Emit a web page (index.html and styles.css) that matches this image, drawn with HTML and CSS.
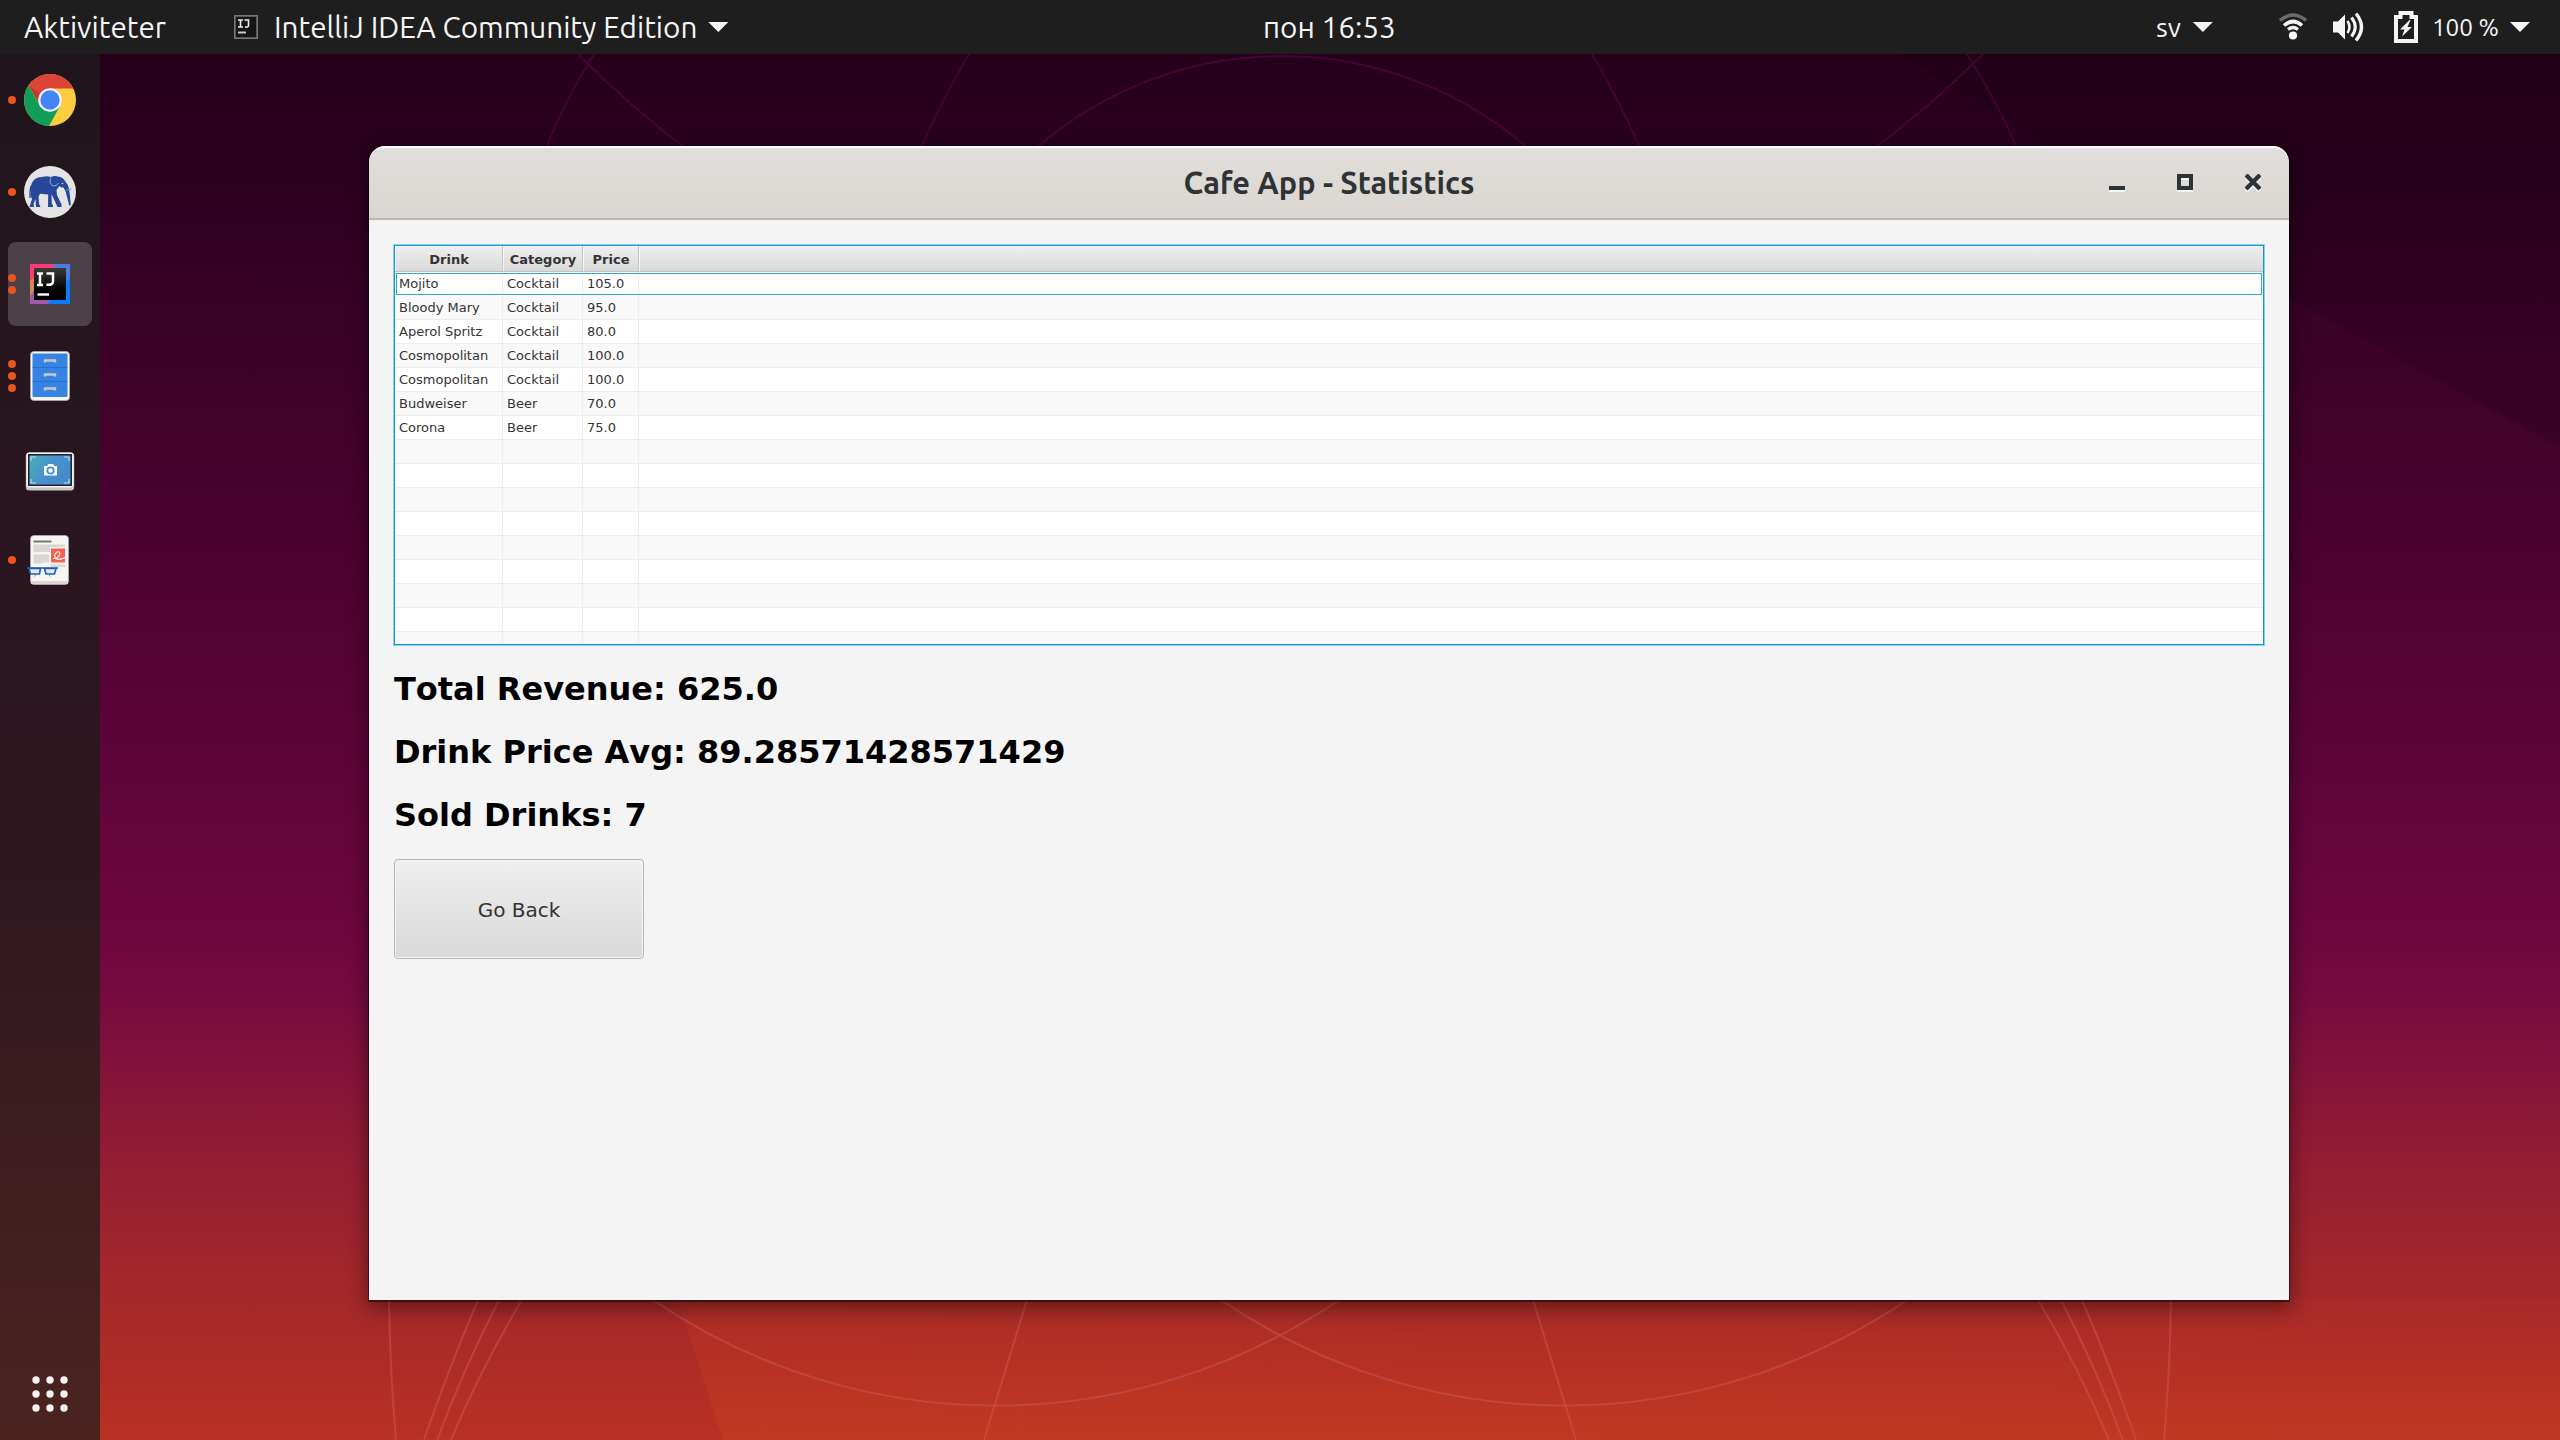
FILE: index.html
```html
<!DOCTYPE html>
<html lang="sv">
<head>
<meta charset="utf-8">
<title>Cafe App - Statistics</title>
<link rel="stylesheet" href="styles.css">
</head>
<body>
<svg class="wallpaper" viewBox="0 0 2560 1440" aria-hidden="true">
  <defs>
    <linearGradient id="glow" x1="2000" y1="1270" x2="1996" y2="1450" gradientUnits="userSpaceOnUse">
      <stop offset="0" stop-color="#c83a22" stop-opacity="0"/><stop offset="1" stop-color="#c83e20" stop-opacity=".5"/>
    </linearGradient>
  </defs>
  <path d="M1900 54 L2289 298 L2560 447 V54Z" fill="#000" fill-opacity=".11"/>
  <path d="M678 1300 L723 1440 H2560 V1300Z" fill="url(#glow)"/>
  <g fill="none" stroke="#7a0a50" stroke-opacity=".36" stroke-width="2">
    <circle cx="1282" cy="430" r="374"/>
    <path d="M578 54 Q630 107 688 150M594 54 Q565 100 545 150M969 54 Q942 100 920 150M1592 54 Q1619 100 1641 150M1967 54 Q1996 100 2018 150M1983 54 Q1930 107 1872 150"/>
  </g>
  <g fill="none" stroke="#c9605c" stroke-opacity=".45" stroke-width="2">
    <path d="M653 1300 A610 610 0 0 0 1339 1300M1221 1300 A610 610 0 0 0 1907 1300"/>
    <path d="M389 1300 Q390 1370 396 1440M478 1300 Q448 1370 424 1440M499 1300 Q463 1370 437 1440M522 1300 Q480 1370 451 1440M1027 1300 L984 1440"/>
    <path d="M2171 1300 Q2170 1370 2164 1440M2082 1300 Q2112 1370 2136 1440M2061 1300 Q2097 1370 2123 1440M2038 1300 Q2080 1370 2109 1440M1533 1300 L1576 1440"/>
  </g>
</svg>
<div class="desktop">
  <header class="topbar">
    <div class="side">
      <span class="activities">Aktiviteter</span>
      <svg class="app-icon" width="24" height="24" viewBox="0 0 24 24"><rect x=".8" y=".8" width="22.4" height="22.4" fill="#151515" stroke="#777" stroke-width="1.8"/><path d="M4 5h5M6.500 5v7M4 12h5M10.500 5h4v5.500q0 2-3.500 1.500" fill="none" stroke="#eee" stroke-width="1.6"/><path d="M4 17.500h8" stroke="#ccc" stroke-width="2"/></svg>
      <span class="app-name">IntelliJ IDEA Community Edition</span>
      <i class="caret"></i>
    </div>
    <div class="clock">пон 16:53</div>
    <div class="side right">
      <span class="lang">sv</span><i class="caret"></i>
      <svg class="wifi" width="28" height="28" viewBox="0 0 28 28" fill="none"><path d="M1 7.500Q14-3.500 27 7.500" stroke="#6b6b6b" stroke-width="3.600"/><path d="M5 12.500Q14 4.500 23 12.500" stroke="#f5f5f5" stroke-width="3.600"/><path d="M9 16.500Q14 12.500 19 16.500" stroke="#f5f5f5" stroke-width="3.200"/><circle cx="14" cy="22.500" r="4.100" fill="#f5f5f5"/></svg>
      <svg class="sound" width="32" height="30" viewBox="0 0 32 30" fill="none" stroke="#f5f5f5"><path d="M0 9.500h5l7-7v25l-7-7H0z" fill="#f5f5f5" stroke="none"/><path d="M14.500 9q4 6 0 12" stroke-width="2.600"/><path d="M18.500 5.500q7.500 9.500 0 19" stroke-width="3"/><path d="M23 1.500q11 13.500 0 27" stroke-width="3.400"/></svg>
      <svg class="battery" width="24" height="32" viewBox="0 0 24 32"><path d="M6.500 2h11v4H22v24H2V6h4.500z" fill="none" stroke="#f5f5f5" stroke-width="4"/><path d="M15.500 9L6 18.500h4.500L8 25.500 18 16h-4.500L16.500 9z" fill="#f5f5f5"/></svg>
      <span class="percent">100 %</span><i class="caret"></i>
    </div>
  </header>
  <div class="body">
    <nav class="dock">
      <div class="item"><span class="dots"><b></b></span>
        <svg width="52" height="52" viewBox="0 0 52 52"><circle cx="26" cy="26" r="26" fill="#fdcd40"/><path d="M4.500 11.500A26 26 0 0 1 49.300 14.500H26L15 29.500Z" fill="#db4437"/><path d="M4.500 11.500A26 26 0 0 0 25 52L36 32 26 37 15 30Z" fill="#0f9d58"/><path d="M4.500 11.500L15 29.500 17 20z" fill="#a52714" opacity=".4"/><circle cx="26" cy="26" r="11.800" fill="#f1f1f1"/><circle cx="26" cy="26" r="9.700" fill="#4285f4"/></svg></div>
      <div class="item"><span class="dots"><b></b></span>
        <svg width="52" height="52" viewBox="0 0 52 52"><circle cx="26" cy="26" r="26" fill="#e4e4e5"/><path d="M6.500 29Q6 18 9.500 14.500 12 11 18 11q5-1.500 9 0 3-1.500 7-.5 5 .5 7 4.500 3 3 4 8l1 7 .8 9.500h-1.600L43 31q-1-6-3.500-9.500-2.500 .5-4-1.500l-3 4 .5 5 4.500 9.500v2.500h-4L27.500 28l.3 9.500 1.200 2V41h-5l.2-12.500-8.200-.8-1.500 3 .5 7 1.500 3.300h-4.500l-.5-8-2 4.500 .5 3.500H5.500l2.500-8z" fill="#27479a"/><path d="M7 20Q5.500 25 6 32" fill="none" stroke="#27479a" stroke-width="1.400"/><path d="M42 24l5.500-1" stroke="#8894b5" stroke-width="1"/><path d="M27 11.500q-2.500 6 2 8.500 4 .5 5.500-3" fill="none" stroke="#bcc4d8" stroke-width=".8"/><circle cx="38.500" cy="17.500" r=".8" fill="#dde"/></svg></div>
      <div class="item active"><span class="dots"><b></b><b></b></span>
        <svg width="40" height="40" viewBox="0 0 40 40"><defs><linearGradient id="ijk" x2="0" y2="1"><stop stop-color="#3a3a3a"/><stop offset=".7"/></linearGradient></defs><path d="M0 0h40v40H0z" fill="#4b7ddd"/><path d="M0 0h22l8 8L0 17z" fill="#fe3a73"/><path d="M0 16l12-4v16L4 36 0 40z" fill="#d08b50"/><path d="M0 40v-8l6-8 14 16z" fill="#a05aa8"/><path d="M18 40l22-26v26z" fill="#087cfa"/><path d="M4 4h32v32H4z" fill="url(#ijk)"/><path d="M7 9.500h6M10 9.500v11M7 21h6M16.500 9.500h6.500v8q0 4-6.500 3" fill="none" stroke="#fff" stroke-width="2.500"/><path d="M7.500 30.500h11.500" stroke="#fff" stroke-width="2.400"/></svg></div>
      <div class="item"><span class="dots"><b></b><b></b><b></b></span>
        <svg width="40" height="50" viewBox="0 0 40 50"><rect x=".5" y=".5" width="39" height="49" rx="3.500" fill="#f6f5f4" stroke="#aaa" stroke-width=".8"/><rect x="2.500" y="2.500" width="35" height="43.500" rx="1" fill="#3584e4"/><path d="M2.500 16.500h35M2.500 30.500h35" stroke="#2a6fca" stroke-width="1.200"/><path d="M15 11.500V9.500h10v2M15 25.500v-2h10v2M15 39.500v-2h10v2" fill="none" stroke="#c9c8c8" stroke-width="2.400"/></svg></div>
      <div class="item"><span class="dots"></span>
        <svg class="shot" width="50" height="40" viewBox="0 0 50 40"><defs><linearGradient id="scr" y2=".5"><stop stop-color="#45b3ae"/><stop offset=".6" stop-color="#4a8fd0"/><stop offset="1" stop-color="#438cc8"/></linearGradient></defs><rect x=".8" y="1.500" width="48.400" height="38" rx="3.500" fill="#c6c5c3"/><rect x="1.500" y="1.500" width="47" height="35" rx="3" fill="#f3f2f0"/><path d="M3 3h44v32H3z" fill="#241f31"/><path d="M4.500 4.500h41v29h-41z" fill="url(#scr)"/><path d="M6 10V6h5M39 6h5v4M6 28v4h5M39 32h5v-4" fill="none" stroke="#b5dcea" stroke-width="1.200"/><path d="M19 15h3l1.500-2h4.500l1.500 2H32v9.500H19z" fill="#fff"/><circle cx="25.500" cy="19.500" r="3.200" fill="none" stroke="#4191cc" stroke-width="1.800"/></svg></div>
      <div class="item"><span class="dots"><b></b></span>
        <svg class="doc" width="44" height="50" viewBox="0 0 44 50"><rect x="3.500" y=".5" width="38" height="49" rx="3.500" fill="#f6f5f4" stroke="#bbb" stroke-width=".6"/><path d="M6.500 6.500h18" stroke="#77767b" stroke-width="2"/><path d="M6.500 9.500h31.500v2.500H23v5H6.500zM6.500 19.500H22v8H15v1H6.500zM24 29.500h14v2.500H24zM4 46h37v3H4z" fill="#d8d7d3"/><path d="M24 13.500h14v14H24z" fill="#f66151"/><path d="M26 23.500q6 0 7-5 0-2.500-3-1.500-4 3-1 6.500 3 2 9-1" fill="none" stroke="#fff" stroke-width="1.100"/><path d="M2 33.500h11.500l-1 5.500H3.500zM17.500 33.500H29l-1.500 5.500h-8.500z" fill="#e4eaf1" stroke="#1a5fb4" stroke-width="1.600"/><path d="M0 33h31" stroke="#1a5fb4" stroke-width="1.500"/><path d="M7 41.500l3-2M24 41.500l-3-2" stroke="#aaa" stroke-width="1"/></svg></div>
      <svg class="apps" width="36" height="36" viewBox="0 0 36 36" fill="#f3f1ef"><circle cx="4" cy="4" r="3.700"/><circle cx="18" cy="4" r="3.700"/><circle cx="32" cy="4" r="3.700"/><circle cx="4" cy="18" r="3.700"/><circle cx="18" cy="18" r="3.700"/><circle cx="32" cy="18" r="3.700"/><circle cx="4" cy="32" r="3.700"/><circle cx="18" cy="32" r="3.700"/><circle cx="32" cy="32" r="3.700"/></svg>
    </nav>
    <main class="window">
      <div class="titlebar">
        <h1>Cafe App - Statistics</h1>
        <div class="controls">
          <svg width="16" height="18" viewBox="0 0 16 18"><path d="M0 14h16v4H0z" fill="#f7f6f5"/><path d="M0 12h16v4H0z" fill="#2e3436"/></svg>
          <svg width="16" height="18" viewBox="0 0 16 18"><path d="M2 4h12v12H2z" fill="none" stroke="#f7f6f5" stroke-width="4"/><path d="M2 2h12v12H2z" fill="none" stroke="#2e3436" stroke-width="4"/></svg>
          <svg width="16" height="18" viewBox="0 0 16 18"><path d="M1 3l14 14M15 3L1 17" stroke="#f7f6f5" stroke-width="4"/><path d="M1 1l14 14M15 1L1 15" stroke="#2e3436" stroke-width="4.400"/></svg>
        </div>
      </div>
      <div class="content">
        <div class="table">
          <div class="row head"><span>Drink</span><span>Category</span><span>Price</span><span></span></div>
          <div class="row focused"><span>Mojito</span><span>Cocktail</span><span>105.0</span><span></span></div>
          <div class="row"><span>Bloody Mary</span><span>Cocktail</span><span>95.0</span><span></span></div>
          <div class="row"><span>Aperol Spritz</span><span>Cocktail</span><span>80.0</span><span></span></div>
          <div class="row"><span>Cosmopolitan</span><span>Cocktail</span><span>100.0</span><span></span></div>
          <div class="row"><span>Cosmopolitan</span><span>Cocktail</span><span>100.0</span><span></span></div>
          <div class="row"><span>Budweiser</span><span>Beer</span><span>70.0</span><span></span></div>
          <div class="row"><span>Corona</span><span>Beer</span><span>75.0</span><span></span></div>
          <div class="row"><span></span><span></span><span></span><span></span></div>
          <div class="row"><span></span><span></span><span></span><span></span></div>
          <div class="row"><span></span><span></span><span></span><span></span></div>
          <div class="row"><span></span><span></span><span></span><span></span></div>
          <div class="row"><span></span><span></span><span></span><span></span></div>
          <div class="row"><span></span><span></span><span></span><span></span></div>
          <div class="row"><span></span><span></span><span></span><span></span></div>
          <div class="row"><span></span><span></span><span></span><span></span></div>
          <div class="row"><span></span><span></span><span></span><span></span></div>
        </div>
        <p class="stat">Total Revenue: 625.0</p>
        <p class="stat">Drink Price Avg: 89.28571428571429</p>
        <p class="stat">Sold Drinks: 7</p>
        <button class="back">Go Back</button>
      </div>
    </main>
  </div>
</div>
</body>
</html>
```

FILE: styles.css
```css
* { box-sizing: border-box; }
html, body { margin: 0; width: 2560px; height: 1440px; overflow: hidden; }
body {
  background: linear-gradient(#26001a 54px, #2a001e 160px, #3a0228 320px, #4a0230 530px, #5c0439 740px, #6d063f 920px, #740a40 990px, #84133a 1070px, #941d33 1160px, #a3272b 1280px, #ab2b26 1350px, #ba3125 1440px);
  font-family: "Ubuntu", "Noto Sans", sans-serif;
}
svg { display: block; flex: none; }
/* The wallpaper lies behind the shell. */
.wallpaper { position: absolute; inset: 0; width: 2560px; height: 1440px; }
.desktop { position: relative; display: flex; flex-direction: column; height: 1440px; }

.topbar {
  display: grid; grid-template-columns: 1239px 132px 1fr; align-items: center;
  height: 54px; padding: 0 30px 0 24px; background: #1e1e1e; color: #f5f5f5; font-size: 29.7px; line-height: 54px;
}
.side { display: flex; align-items: center; height: 54px; }
.side.right { justify-content: flex-end; }
.activities { width: 210px; }
.app-name { margin: 0 11px 0 16px; white-space: nowrap; }
.caret { flex: none; width: 20px; height: 10px; background: #f5f5f5; clip-path: polygon(0 0, 100% 0, 50% 100%); }
.clock { white-space: nowrap; height: 54px; }
.lang { margin-right: 12px; font-size: 27px; }
.wifi { margin-left: 66px; }
.sound { margin-left: 26px; }
.battery { margin-left: 29px; }
.percent { margin: 0 11px 0 14px; font-size: 24.3px; }

.body { display: flex; flex: 1; min-height: 0; }
.dock {
  display: flex; flex-direction: column; align-items: center;
  width: 100px; flex: none; padding: 4px 0 28px; gap: 8px;
  background: linear-gradient(#20151c, #28151f 30%, #30171f 60%, #452121 90%, #4a231f);
}
.item { display: grid; grid-template-columns: 1fr; place-items: center; position: relative; width: 84px; height: 84px; border-radius: 8px; }
.item.active { background: #4d4149; }
.dots { position: absolute; left: 0; top: 0; display: flex; flex-direction: column; justify-content: center; gap: 4px; height: 84px; }
.dots b { width: 8px; height: 8px; border-radius: 50%; background: #e95420; }
.shot { margin-top: 5px; }
.doc { margin-right: 2px; }
.apps { margin-top: auto; }

.window {
  width: 1920px; height: 1154px; margin: 92px 0 0 269px; display: flex; flex-direction: column;
  border-radius: 16px 16px 0 0; overflow: hidden; background: #f4f4f4;
  box-shadow: 0 1px 0 1px rgba(0, 0, 0, .45), 0 6px 20px 2px rgba(0, 0, 0, .42);
}
.titlebar {
  display: grid; grid-template-columns: 1fr auto 1fr; align-items: center;
  height: 74px; padding: 0 28px; border-top: 2px solid #fff; border-bottom: 2px solid #bfb8b1;
  border-radius: 16px 16px 0 0; background: linear-gradient(#e1dedb, #dad7d2); color: #2e3436;
}
h1 { grid-column: 2; margin: 0; font-size: 30.7px; line-height: 70px; height: 70px; font-weight: 700; white-space: nowrap; }
.controls { display: flex; justify-content: flex-end; gap: 52px; }
.content { padding: 25px; font-family: "DejaVu Sans", sans-serif; }

.table {
  width: 1870px; height: 400px; overflow: hidden; background: #fff;
  border: 1px solid #039ed3; box-shadow: 0 0 0 1px #8fcfe5; color: #333; font-size: 13px;
}
.row { display: grid; grid-template-columns: 108px 80px 56px 1fr; height: 24px; line-height: 24px; border-bottom: 1px solid #ededed; white-space: nowrap; }
.row span { height: 23px; padding-left: 4px; border-right: 1px solid #ededed; }
.row span:last-child { border-right: 0; }
.row:nth-child(odd) { background: #f9f9f9; }
.row.head { height: 26px; line-height: 28px; font-weight: 700; background: linear-gradient(#efefef, #d9d9d9); border-bottom: 1px solid #c3c3c3; text-align: center; }
.row.head span { height: 25px; padding: 0 0 0 1px; border-color: #c3c3c3; box-shadow: inset 1px 1px #f8f8f8; }
.row.focused { border-color: #fff; outline: 1px solid #32a7d3; outline-offset: -2px; }

.stat { margin: 0; color: #000; font-size: 32px; font-weight: 700; line-height: 38px; font-kerning: none; }
.table + .stat { margin-top: 25px; }
.stat + .stat { margin-top: 25px; }
.back {
  display: block; width: 250px; height: 100px; margin-top: 25px; padding: 2px 0 0; border: 1px solid #b5b5b5; border-radius: 4px;
  background: linear-gradient(#efefef, #d9d9d9); box-shadow: inset 0 0 0 1px #f4f4f4;
  color: #333; font: 20px "DejaVu Sans", sans-serif;
}
```
